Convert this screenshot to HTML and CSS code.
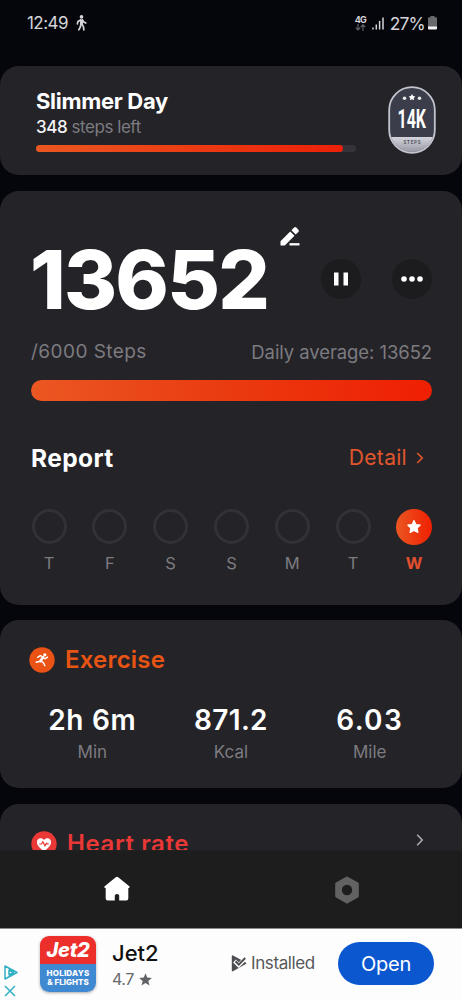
FILE: index.html
```html
<!DOCTYPE html>
<html lang="en">
<head>
<meta charset="utf-8">
<title>Step counter</title>
<link rel="stylesheet" href="styles.css">
</head>
<body>
<div class="phone">
  <header class="status">
    <div class="status-left">
      <span class="clock">12:49</span>
      <svg class="walker" width="11" height="16" viewBox="0 0 11 16"><circle cx="5.500" cy="1.900" r="1.800" fill="#d5d5d9"/><path d="M4 4.500h3v5.500H4z" fill="#d5d5d9"/><path d="M4.600 5L1.900 6.600 1.400 8.800M6.500 5l1.300 2 2 1.100M4.800 9.500l-.5 2.500-1.500 2.800M6.200 9.500l1.300 2.300.3 3" fill="none" stroke="#d5d5d9" stroke-width="1.700" stroke-linecap="round" stroke-linejoin="round"/></svg>
    </div>
    <div class="status-right">
      <div class="network"><span>4G</span>
        <svg width="11" height="7" viewBox="0 0 11 7"><path d="M3 0v5.500M.8 3.600L3 6l2.200-2.400M8 7V1M5.800 3L8 .8 10.200 3" fill="none" stroke="#66676c" stroke-width="1.100"/></svg>
      </div>
      <svg class="signal" width="12" height="13" viewBox="0 0 12 13"><path d="M1 10.500v2M4.300 7.500v5M7.600 4v8.500M11 .5v12" stroke="#d5d5d9" stroke-width="1.500"/></svg>
      <span class="percent">27%</span>
      <svg class="battery" width="9" height="14" viewBox="0 0 9 14"><path d="M2.500 0h4v1.300H8q1 0 1 1V11H0V2.300q0-1 1-1h1.500z" fill="#68696d"/><path d="M0 10.500h9V12.500q0 1-1 1H1q-1 0-1-1z" fill="#f4f4f4"/></svg>
    </div>
  </header>

  <main class="feed">
    <section class="card goal">
      <div class="goal-info">
        <h2 class="goal-title">Slimmer Day</h2>
        <p class="goal-left"><b>348</b> steps left</p>
        <div class="goal-track"><div class="goal-fill"></div></div>
      </div>
      <svg class="badge" width="48" height="68" viewBox="0 0 48 68">
        <defs>
          <linearGradient id="silver" x1="0" y1="0" x2="0" y2="1"><stop offset="0" stop-color="#d5d5dc"/><stop offset="1" stop-color="#8e909b"/></linearGradient>
          <clipPath id="pill"><rect x="2" y="2" width="44" height="64" rx="22"/></clipPath>
        </defs>
        <rect x="1" y="1" width="46" height="66" rx="23" fill="#3b3e4a"/>
        <rect x="0" y="51" width="48" height="17" fill="url(#silver)" clip-path="url(#pill)"/>
        <rect x="1.200" y="1.200" width="45.600" height="65.600" rx="22.800" fill="none" stroke="#c3c4ce" stroke-width="1.800"/>
        <path d="M24 8l1.100 2.100 2.300.3-1.700 1.600.4 2.300-2.100-1.100-2.100 1.100.4-2.300-1.700-1.600 2.300-.3z" fill="#fff"/>
        <circle cx="16.500" cy="12.300" r="1.800" fill="#e6e6ea"/><circle cx="31.500" cy="12.300" r="1.800" fill="#e6e6ea"/>
        <text class="badge-num" x="9.500" y="42" textLength="28.500" lengthAdjust="spacingAndGlyphs">14K</text>
        <text class="badge-cap" x="15.500" y="58" textLength="17">STEPS</text>
      </svg>
    </section>

    <section class="card today">
      <div class="count-row">
        <span class="count">13652</span>
        <svg class="pencil" width="20" height="20" viewBox="0 0 20 20"><path d="M.5 19.500v-4.300L10.200 5.500l4.300 4.300L4.800 19.500zM11.400 4.300l2.700-2.700q1.100-1.100 2.200 0l2.100 2.100q1.100 1.100 0 2.200l-2.700 2.700z" fill="#fff"/><path d="M9.500 18.300h10" stroke="#fff" stroke-width="2.300"/></svg>
        <button class="round"><svg width="14" height="14" viewBox="0 0 14 14"><path d="M0 .5h4.500v13H0zM9.500 .5H14v13H9.500z" fill="#fff"/></svg></button>
        <button class="round"><svg width="22" height="6" viewBox="0 0 22 6"><circle cx="3" cy="3" r="2.800" fill="#fff"/><circle cx="11" cy="3" r="2.800" fill="#fff"/><circle cx="19" cy="3" r="2.800" fill="#fff"/></svg></button>
      </div>
      <div class="target"><span class="target-goal">/6000 Steps</span><span class="target-avg">Daily average: 13652</span></div>
      <div class="bar"></div>
      <div class="report-head">
        <h2 class="report-title">Report</h2>
        <a class="detail">Detail</a>
        <svg width="8" height="12" viewBox="0 0 8 12"><path d="M1.200 1l5 5-5 5" fill="none" stroke="#e0572c" stroke-width="1.700"/></svg>
      </div>
      <div class="week">
        <div class="day"><i class="ring"></i><span>T</span></div>
        <div class="day"><i class="ring"></i><span>F</span></div>
        <div class="day"><i class="ring"></i><span>S</span></div>
        <div class="day"><i class="ring"></i><span>S</span></div>
        <div class="day"><i class="ring"></i><span>M</span></div>
        <div class="day"><i class="ring"></i><span>T</span></div>
        <div class="day done"><i class="disc"><svg width="16" height="16" viewBox="0 0 16 16"><path d="M8 1.600l1.900 3.900 4.300.6-3.100 3 .8 4.300L8 11.400l-3.900 2 .8-4.300-3.100-3 4.300-.6z" fill="#fff" stroke="#fff" stroke-width="1.200" stroke-linejoin="round"/></svg></i><span>W</span></div>
      </div>
    </section>

    <section class="card exercise">
      <div class="section-head">
        <svg width="26" height="26" viewBox="0 0 26 26"><circle cx="13" cy="13" r="12.700" fill="#ea5315"/><circle cx="15.800" cy="7.800" r="1.600" fill="#fff"/><path d="M8.600 10.300l2.700-1.700 3 1.500" fill="none" stroke="#fff" stroke-width="1.400" stroke-linecap="round" stroke-linejoin="round"/><path d="M14 10.300l-2.600 3.900" stroke="#fff" stroke-width="2.600" stroke-linecap="round"/><path d="M11 14.300l-3.800.9M12 14.200l2.400 1.500 1.500 3M14.400 10.500l1.600 1.300 2.500-1.700" fill="none" stroke="#fff" stroke-width="1.400" stroke-linecap="round" stroke-linejoin="round"/></svg>
        <h2 class="exercise-title">Exercise</h2>
      </div>
      <div class="stats">
        <div class="stat"><b class="time">2h 6m</b><span>Min</span></div>
        <div class="stat"><b class="energy">871.2</b><span>Kcal</span></div>
        <div class="stat"><b class="distance">6.03</b><span>Mile</span></div>
      </div>
    </section>

    <section class="card heart">
      <div class="section-head">
        <svg width="26" height="26" viewBox="0 0 26 26"><circle cx="13" cy="13" r="12.700" fill="#e93835"/><path d="M13 20.300C8.500 16.900 5.900 14.300 5.900 11.300c0-4.300 4.900-5.300 7.100-2.300 2.200-3 7.100-2 7.100 2.300 0 3-2.600 5.600-7.100 9z" fill="#fff"/><path d="M8.300 13h2.200l1.400-2.200 2 4 1.500-2.600.8.800h1.700" fill="none" stroke="#e93835" stroke-width="1.200"/></svg>
        <h2 class="heart-title">Heart rate</h2>
      </div>
      <svg class="heart-more" width="8" height="12" viewBox="0 0 8 12"><path d="M1.200 .8l5 5.200-5 5.200" fill="none" stroke="#aaaaad" stroke-width="1.600"/></svg>
    </section>
  </main>

  <nav class="tabs">
    <a class="tab home"><svg width="26" height="26" viewBox="0 0 26 26"><path d="M11.800 1.300q1.200-.9 2.400 0L25 10q1 .9.400 1.500-.3.500-1.100.5v10.500q0 2-2 2H15.200v-5q0-1.500-2.200-1.500t-2.200 1.500v5H3.700q-2 0-2-2V12Q.8 12 .5 11.500-.1 10.900 1 10z" fill="#fff"/></svg></a>
    <a class="tab"><svg width="26" height="28" viewBox="0 0 26 28"><path d="M13 2l10.300 5.900v12.200L13 26 2.700 20.100V7.900z" fill="#626262" stroke="#626262" stroke-width="3" stroke-linejoin="round"/><circle cx="13" cy="14" r="5.200" fill="#1d1d1e"/></svg></a>
  </nav>

  <footer class="ad">
    <div class="ad-marks">
      <svg width="14" height="15" viewBox="0 0 14 15"><path d="M1 1l12 6.500L1 14zM5 10.500V5l4.500 2.500L5 10" fill="none" stroke="#31b0c4" stroke-width="1.500" stroke-linejoin="round"/></svg>
      <svg width="12" height="12" viewBox="0 0 12 12"><path d="M1 1l10 10M11 1L1 11" stroke="#31b0c4" stroke-width="1.500"/></svg>
    </div>
    <div class="logo">
      <div class="logo-top">Jet2</div>
      <div class="logo-bottom"><span>HOLIDAYS</span><span class="flights">&amp; FLIGHTS</span></div>
    </div>
    <div class="ad-text">
      <div class="ad-name">Jet2</div>
      <div class="ad-rate">4.7 <svg width="13" height="13" viewBox="0 0 13 13"><path d="M6.500 .3l1.700 4.300 4.700.3-3.600 3 1.200 4.600-4-2.500-4 2.500 1.200-4.600-3.600-3 4.700-.3z" fill="#626366"/></svg></div>
    </div>
    <div class="installed">
      <svg width="16" height="18" viewBox="0 0 16 18"><path d="M.8 2Q.8.800 2 1.400L8.500 5 13 7.500l1.800 1q1.200.8 0 1.500L2 17.200q-1.200.5-1.200-.7z" fill="#4d4e51"/><path d="M3.500 7l4.200 4.200L15 4" fill="none" stroke="#fdfdfd" stroke-width="4"/><path d="M4.600 7.300l3.200 3.300L14.200 4" fill="none" stroke="#4d4e51" stroke-width="2"/></svg>
      <span>Installed</span>
    </div>
    <button class="open">Open</button>
  </footer>
</div>
</body>
</html>
```
FILE: styles.css
```css
* { box-sizing: border-box; }
body { margin: 0; background: #05060c; font-family: Inter, "Open Sans", sans-serif; color: #fff; }
h2, p { margin: 0; }
svg { display: block; flex: none; }
button { border: 0; padding: 0; font-family: inherit; color: #fff; }
.phone { width: 462px; height: 1000px; display: flex; flex-direction: column; overflow: hidden; white-space: nowrap; }

.status { height: 66px; flex: none; display: flex; justify-content: space-between; align-items: flex-start; padding: 13px 25px 0 27px; color: #d5d5d9; }
.status-left, .status-right { display: flex; align-items: center; height: 20px; }
.clock { font-size: 17px; letter-spacing: -0.55px; }
.walker { margin-left: 8px; }
.network { width: 12px; margin-right: 5px; font-size: 9px; font-weight: 700; line-height: 8px; letter-spacing: -0.6px; }
.percent { font-size: 17.5px; margin: 0 3px 0 6px; letter-spacing: -0.8px; }

.feed { height: 784px; flex: none; display: flex; flex-direction: column; gap: 15.5px; overflow: hidden; }
.card { flex: none; background: #242328; border-radius: 19px; }

.goal { height: 109px; display: flex; justify-content: space-between; padding: 20px 26px 0 36px; }
.goal-info { width: 320px; }
.goal-title { font-size: 22px; line-height: 30px; font-weight: 700; letter-spacing: -0.3px; }
.goal-left { font-size: 17px; line-height: 22px; color: #7c7b80; letter-spacing: -0.45px; }
.goal-left b { font-weight: 500; color: #f5f5f7; }
.goal-track { margin-top: 7px; height: 7px; border-radius: 4px; background: #35323a; }
.goal-fill { width: 307px; height: 7px; border-radius: 4px; background: linear-gradient(90deg, #ea5720, #ec2108); }
.badge-num { font: 700 25px "Roboto", sans-serif; fill: #fff; }
.badge-cap { font: 700 4.5px "Roboto", sans-serif; fill: #555762; }

.today { height: 414px; padding: 33px 30px 0 31px; }
.count-row { display: flex; height: 110px; }
.count { width: 251px; margin-left: -1px; padding-top: 1px; font-size: 81px; line-height: 110px; font-weight: 800; letter-spacing: -1.8px; }
.pencil { margin: 2px 20px 0 -1px; }
.round { width: 40px; height: 40px; margin-top: 35px; border-radius: 50%; background: #1c1b1e; display: flex; align-items: center; justify-content: center; }
.pencil + .round { margin-left: 1px; }
.round + .round { margin-left: 31px; }
.target { display: flex; justify-content: space-between; height: 36px; padding-top: 6px; font-size: 18.5px; line-height: 24px; color: #7c7b80; }
.target-goal { font-size: 19px; letter-spacing: 0.45px; }
.target-avg { letter-spacing: -0.08px; }
.bar { margin-top: 10px; height: 21px; border-radius: 11px; background: linear-gradient(90deg, #eb5722, #ea3a10 50%, #ef1f02); }
.report-head { display: flex; align-items: center; height: 32px; margin-top: 41px; padding-right: 8px; }
.report-title { flex: 1; font-size: 24.5px; line-height: 32px; font-weight: 700; letter-spacing: 0.4px; }
.detail { font-size: 21px; line-height: 30px; color: #e0572c; letter-spacing: 0.3px; margin-right: 9px; }
.week { display: flex; justify-content: space-between; margin-top: 35px; }
.day { width: 36px; display: flex; flex-direction: column; align-items: center; font-size: 16.5px; line-height: 24px; color: #7c7b80; }
.ring, .disc { width: 35px; height: 36px; margin-bottom: 6px; }
.ring { height: 35px; margin-bottom: 7px; border: 3px solid #323136; border-radius: 50%; }
.disc { width: 36px; border-radius: 50%; background: linear-gradient(90deg, #eb5722, #ef1f02); display: flex; align-items: center; justify-content: center; }
.done { color: #e4502f; font-weight: 700; font-size: 16px; }

.exercise { height: 168px; padding: 23.5px 23px 0; }
.section-head { display: flex; align-items: center; height: 32px; gap: 10px; padding-left: 6px; }
.section-head h2 { font-size: 24px; line-height: 32px; font-weight: 600; }
.exercise-title { color: #e85414; letter-spacing: 0.2px; }
.stats { display: grid; grid-template-columns: repeat(3, 1fr); margin-top: 26px; }
.stat { display: flex; flex-direction: column; align-items: center; }
.stat b { font-size: 28px; line-height: 36px; font-weight: 600; }
.stat .time { letter-spacing: 0.7px; }
.stat .energy { letter-spacing: 0.3px; }
.stat .distance { letter-spacing: 1.3px; }
.stat span { font-size: 17px; line-height: 24px; margin-top: 2px; color: #7c7b80; }

.heart { height: 120px; display: flex; justify-content: space-between; padding: 24px 38px 0 25px; }
.heart-title { color: #e93835; letter-spacing: 0.6px; padding-top: 1px; }
.heart-more { margin-top: 6px; }

.tabs { height: 78px; flex: none; display: flex; background: #1d1d1e; border-top: 1px solid #202022; }
.tab { flex: 1; display: flex; justify-content: center; align-items: center; }
.home { padding: 0 0 1px 2px; }

.ad { flex: 1; display: flex; background: #fdfdfd; border-top: 1px solid #8a8a8a; color: #202124; }
.ad-marks { width: 40px; padding: 36px 0 0 4px; display: flex; flex-direction: column; gap: 5px; }
.logo { width: 56px; height: 56px; margin-top: 7px; border-radius: 9px; overflow: hidden; box-shadow: 0 1px 3px #0005; display: flex; flex-direction: column; color: #fff; font-weight: 800; text-align: center; }
.logo-top { height: 28px; background: #ed2f2b; font-size: 20px; line-height: 28px; font-style: italic; letter-spacing: -0.3px; }
.logo-bottom { height: 28px; background: #3f88d2; display: flex; flex-direction: column; padding-top: 5px; font-size: 8px; line-height: 9px; letter-spacing: 0.2px; }
.flights { letter-spacing: 0; }
.ad-text { width: 120px; padding: 10px 0 0 16px; }
.ad-name { font-size: 22px; line-height: 28px; font-weight: 500; color: #111; }
.ad-rate { display: flex; align-items: center; gap: 4px; font-size: 16px; line-height: 24px; letter-spacing: -0.5px; color: #67686b; }
.ad-rate svg { margin-left: 1px; }
.installed { display: flex; align-items: center; height: 24px; margin: 22px 0 0 15px; gap: 4px; width: 107px; font-size: 17px; letter-spacing: -0.4px; color: #56575a; }
.open { width: 96px; height: 43px; margin-top: 13px; border-radius: 22px; background: #0b57d0; font-size: 20px; letter-spacing: -0.3px; }
```
